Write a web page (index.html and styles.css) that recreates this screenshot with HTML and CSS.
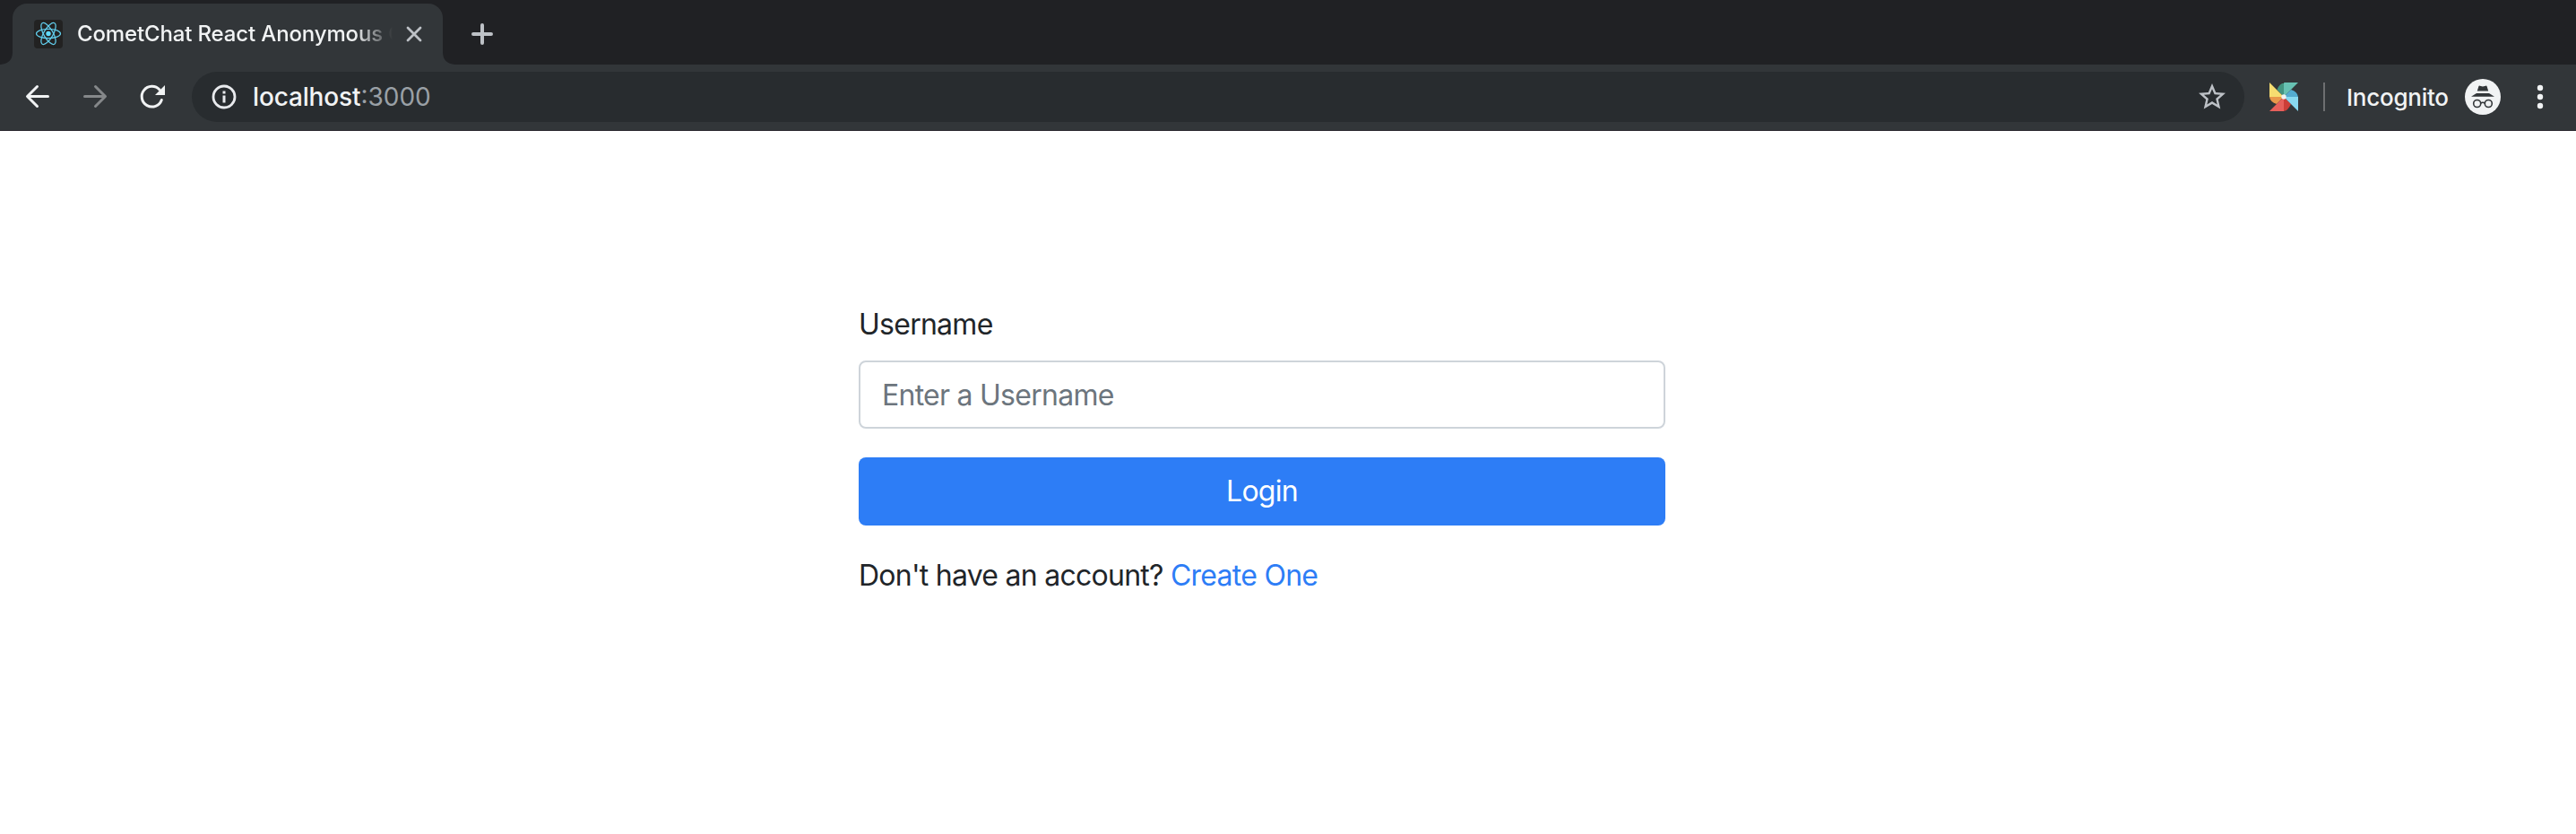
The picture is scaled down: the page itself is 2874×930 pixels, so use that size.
FILE: index.html
```
<!DOCTYPE html>
<html lang="en">
<head>
<meta charset="utf-8">
<title>CometChat React Anonymous Chat</title>
<link rel="stylesheet" href="styles.css">
</head>
<body>
<header class="browser">
  <div class="tabstrip">
    <svg class="foot" viewBox="0 0 14 14"><path d="M14 0V14H0Q14 13 14 0Z"/></svg>
    <div class="tab">
      <svg class="favicon" viewBox="0 0 32 32">
        <rect width="32" height="32" rx="4" fill="#222"/>
        <g fill="none" stroke="#61cdec" stroke-width="1.25">
          <ellipse cx="16" cy="15.5" rx="13.5" ry="5.2"/>
          <ellipse cx="16" cy="15.5" rx="13.5" ry="5.2" transform="rotate(60 16 15.5)"/>
          <ellipse cx="16" cy="15.5" rx="13.5" ry="5.2" transform="rotate(120 16 15.5)"/>
        </g>
        <circle cx="16" cy="15.5" r="2.7" fill="#61dafb"/>
      </svg>
      <span class="tab-title">CometChat React Anonymous C</span>
      <svg class="tab-close" viewBox="0 0 20 20"><path d="M3 3L17 17M17 3L3 17"/></svg>
    </div>
    <svg class="foot" viewBox="0 0 14 14"><path d="M0 0V14H14Q0 13 0 0Z"/></svg>
    <svg class="new-tab" viewBox="0 0 28 28"><path d="M14 4V24M4 14H24"/></svg>
  </div>
  <div class="toolbar">
    <svg class="nav" viewBox="0 0 32 32"><path d="M27.5 15.5H5M15.5 4.5L4.5 15.5L15.5 26.5"/></svg>
    <svg class="nav nav-off" viewBox="0 0 32 32"><path d="M4.5 15.5H27M16.5 4.5L27.5 15.5L16.5 26.5"/></svg>
    <svg class="nav" viewBox="0 0 32 32"><path d="M26.3 19.5A11.4 11.4 0 1 1 24 8"/><path class="solid" d="M30 3V14H19Z"/></svg>
    <div class="omnibox">
      <svg class="info" viewBox="0 0 28 28"><circle cx="14" cy="14" r="12" fill="none" stroke="#e8eaed" stroke-width="2.8"/><path fill="#e8eaed" d="M12.5 7.5h3v3h-3zM12.5 12.5h3v8h-3z"/></svg>
      <span class="url">localhost<span class="port">:3000</span></span>
      <svg class="star" viewBox="0 0 24 24"><path d="M22 9.24l-7.19-.62L12 2 9.19 8.63 2 9.24l5.46 4.73L5.82 21 12 17.27 18.18 21l-1.63-7.03L22 9.24zM12 15.4l-3.76 2.27 1-4.28-3.32-2.88 4.38-.38L12 6.1l1.71 4.04 4.38.38-3.32 2.88 1 4.28L12 15.4z"/></svg>
    </div>
    <svg class="extension" viewBox="0 0 32 32">
      <path fill="#67c1b3" d="M16 0H32L16 16Z"/>
      <path fill="#439581" d="M17 0Q11 1 8.5 8L16 16V0Z"/>
      <path fill="#f6dd70" d="M0 0L16 16H0Z"/>
      <path fill="#e9984a" d="M0 16H16L8 24Q1 22 0 16Z"/>
      <path fill="#e6605b" d="M0 32L16 16V32Z"/>
      <path fill="#cc3e38" d="M16 16L24 24Q21 31 16 32Z"/>
      <path fill="#54acd0" d="M16 16L24 8Q31 10 32 16Z"/>
      <path fill="#88d9f0" d="M16 16H32V32Z"/>
      <circle cx="16" cy="16" r="2.7" fill="#f2f2f2"/>
    </svg>
    <span class="divider"></span>
    <span class="incognito">Incognito</span>
    <svg class="avatar" viewBox="0 0 40 40">
      <circle cx="20" cy="20" r="20" fill="#f1f3f4"/>
      <g fill="#323639">
        <path d="M15.4 8.2Q15.8 7.3 16.8 7.7L20 8.5L23.2 7.7Q24.2 7.3 24.6 8.2L26.2 13.5H13.8Z"/>
        <path d="M13 16H27L33 19.8H7Z"/>
      </g>
      <g fill="none" stroke="#323639" stroke-width="1.6">
        <circle cx="13.7" cy="27.5" r="4"/><circle cx="26.3" cy="27.5" r="4"/>
        <path d="M17.7 27.2Q20 25.4 22.3 27.2"/>
      </g>
    </svg>
    <svg class="menu" viewBox="0 0 8 28"><circle cx="4" cy="4" r="3.2"/><circle cx="4" cy="14" r="3.2"/><circle cx="4" cy="24" r="3.2"/></svg>
  </div>
</header>
<main class="page">
  <form class="login">
    <label class="label" for="username">Username</label>
    <input class="input" id="username" type="text" placeholder="Enter a Username">
    <button class="button" type="button">Login</button>
    <p class="signup"><span class="question">Don't have an account?</span> <a class="link" href="#">Create One</a></p>
  </form>
</main>
</body>
</html>
```
FILE: styles.css
```
* { box-sizing: border-box; }
body { margin: 0; background: #fff; font-family: Inter, "Liberation Sans", sans-serif; overflow: hidden; }
svg { display: block; flex: none; }
.browser { height: 146px; background: #323639; border-bottom: 1px solid #28262c; }
.tabstrip { display: flex; align-items: flex-end; height: 72px; background: #202124; }
.foot { width: 14px; height: 14px; fill: #323639; }
.tab { display: flex; align-items: center; width: 480px; height: 68px; padding: 0 22px 0 24px; background: #323639; border-radius: 16px 16px 0 0; }
.favicon { width: 32px; height: 32px; }
.tab-title { width: 352px; margin-left: 16px; white-space: nowrap; font-size: 24px; font-weight: 500; letter-spacing: -0.14px; line-height: 32px; color: #f1f3f4; -webkit-mask-image: linear-gradient(90deg, #000 88%, transparent 100%); mask-image: linear-gradient(90deg, #000 88%, transparent 100%); }
.tab-close { width: 20px; height: 20px; margin-left: 14px; fill: none; stroke: #bdc1c6; stroke-width: 2.8; stroke-linecap: round; }
.new-tab { width: 28px; height: 28px; margin: 0 0 20px 16px; fill: none; stroke: #bdc1c6; stroke-width: 4; stroke-linecap: round; }
.toolbar { display: flex; align-items: center; height: 72px; padding: 0 36px 0 26px; }
.nav { width: 32px; height: 32px; margin-right: 32px; fill: none; stroke: #f1f3f4; stroke-width: 3; stroke-linecap: round; stroke-linejoin: round; }
.nav .solid { fill: #f1f3f4; stroke: none; }
.nav-off { stroke: #85888a; }
.omnibox { display: flex; align-items: center; width: 2290px; height: 56px; padding: 0 18px 0 22px; margin-left: -4px; border-radius: 28px; background: #282c2f; }
.info { width: 28px; height: 28px; }
.url { flex: 1; margin-left: 18px; font-size: 28px; font-weight: 500; letter-spacing: -0.15px; color: #f1f3f4; }
.port { font-weight: 400; letter-spacing: 0; color: #9aa0a6; }
.star { width: 36px; height: 36px; fill: #bdc1c6; }
.extension { width: 32px; height: 32px; margin-left: 28px; }
.divider { width: 2px; height: 32px; margin-left: 28px; background: #6d6f71; }
.incognito { width: 132px; margin-left: 24px; font-size: 26px; font-weight: 500; letter-spacing: -0.25px; color: #f1f3f4; }
.avatar { width: 40px; height: 40px; }
.menu { width: 8px; height: 28px; margin-left: 40px; fill: #f1f3f4; }
.page { display: flex; justify-content: center; padding: 192px 0 0; margin-right: 58px; }
.login { width: 900px; font-size: 32px; line-height: 48px; letter-spacing: -0.74px; color: #212529; }
.label { display: block; margin-bottom: 16px; }
.input { display: block; width: 900px; height: 76px; padding: 0 24px; border: 2px solid #ced4da; border-radius: 8px; background: #fff; font: inherit; letter-spacing: inherit; outline: 0; }
.input::placeholder { color: #6c757d; opacity: 1; }
.button { display: block; width: 900px; height: 76px; margin: 32px 0; padding: 0; border: 0; border-radius: 8px; background: #2d7df6; color: #fff; font: inherit; letter-spacing: inherit; }
.signup { margin: 0; white-space: nowrap; }
.link { color: #2d7df6; text-decoration: none; }
```
